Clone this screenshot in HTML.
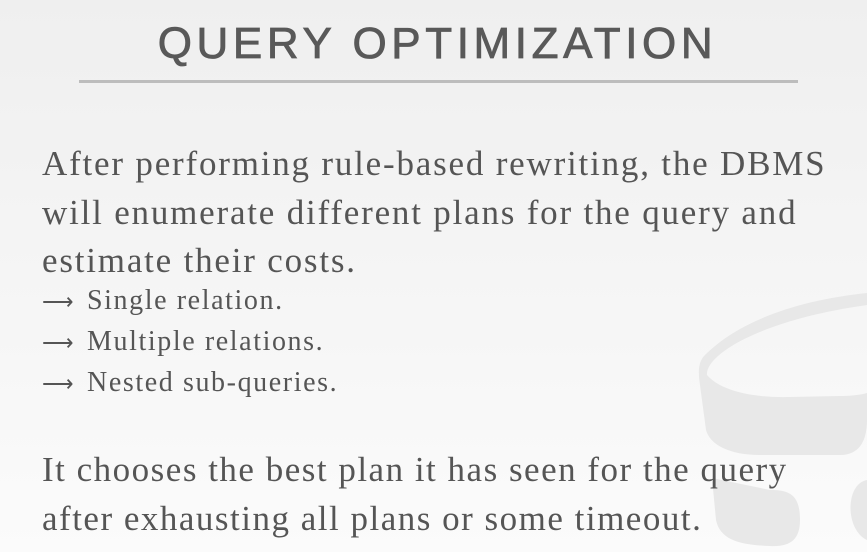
<!DOCTYPE html>
<html><head><style>
body{margin:0;width:867px;height:552px;overflow:hidden;background:linear-gradient(#efefef,#fbfbfb);font-family:"Liberation Serif",serif;color:#555;position:relative}
.t{position:absolute;left:0;width:875px;text-align:center;top:19px;font-family:"Liberation Sans",sans-serif;font-size:44px;letter-spacing:4.6px;color:#595959;-webkit-text-stroke:0.8px #595959}
.rule{position:absolute;left:79px;width:719px;top:80px;height:3px;background:#bdbdbd}
.p{position:absolute;left:42px;font-size:35px;letter-spacing:1.8px;line-height:48.5px;white-space:nowrap}
.s{position:absolute;left:42px;font-size:28px;letter-spacing:1.6px;line-height:40px;white-space:nowrap}
.a{display:inline-block;width:45px;letter-spacing:0;font-size:22px}
</style></head><body>
<svg style="position:absolute;left:0;top:0" width="867" height="552">
<g fill="#e8e8e8">
<path d="M867 293 C800 300 740 320 705 355 C698 362 698 372 700 385 L706 430 C710 445 730 455 760 455 L840 455 C860 455 867 440 867 420 L867 393 C860 395 850 396 840 396 L790 397 C750 398 720 390 707 375 C705 355 760 320 867 305 Z"/>
<path d="M712 478 L716 520 C720 540 740 545 770 546 C790 547 800 540 800 520 C800 495 790 490 770 490 Z"/>
<path d="M867 480 C845 484 845 530 867 540 Z"/>
</g></svg>
<div class="t">QUERY OPTIMIZATION</div>
<div class="rule"></div>
<div class="p" style="top:140px">After performing rule-based rewriting, the DBMS<br>will enumerate different plans for the query and<br>estimate their costs.</div>
<div class="s" style="top:281px"><span class="a">⟶</span>Single relation.<br><span class="a">⟶</span>Multiple relations.<br><span class="a">⟶</span>Nested sub-queries.</div>
<div class="p" style="top:446px;letter-spacing:1.5px">It chooses the best plan it has seen for the query<br>after exhausting all plans or some timeout.</div>
</body></html>
